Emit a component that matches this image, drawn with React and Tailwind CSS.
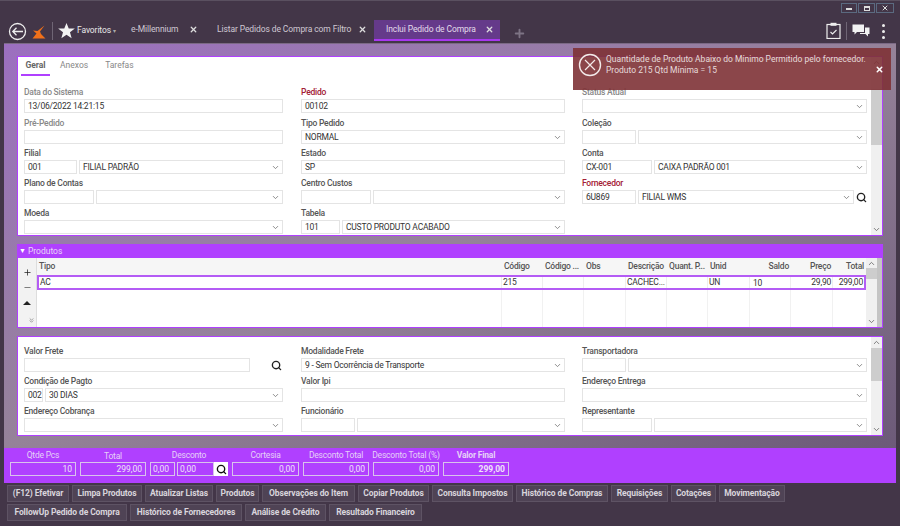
import React from "react";
import { Search, ChevronDown, ChevronUp, ChevronsDown, Plus, Minus, X } from "lucide-react";

const Chev = ({ className = "" }) => (
  <ChevronDown size={9} strokeWidth={2.2} className={"text-[#777] shrink-0 " + className} />
);

const Box = ({ w, children, grow }) => (
  <div
    className={"h-[14px] border border-[#e4e4e4] bg-white flex items-center px-[3px] text-[8.5px] tracking-[-0.22px] text-[#333] leading-none overflow-hidden whitespace-nowrap " + (grow ? "flex-1 min-w-0" : "shrink-0")}
    style={w ? { width: w } : undefined}
  >
    {children}
  </div>
);

const Combo = ({ w, children }) => (
  <div
    className={"h-[14px] border border-[#e4e4e4] bg-white flex items-center justify-between pl-[3px] pr-[2px] text-[8.5px] tracking-[-0.22px] text-[#333] leading-none overflow-hidden whitespace-nowrap " + (w ? "shrink-0" : "flex-1 min-w-0")}
    style={w ? { width: w } : undefined}
  >
    <span>{children}</span>
    <Chev />
  </div>
);

const Field = ({ label, tone = "text-[#555]", children }) => (
  <div className="h-[30px]">
    <div className={"h-[15px] flex items-center pt-px text-[8.5px] tracking-[-0.22px] leading-none font-medium " + tone}>{label}</div>
    <div className="flex gap-[2px] items-center h-[14px]">{children}</div>
  </div>
);

const Scroll = ({ thumbTop, thumbH }) => (
  <div className="w-[11px] self-stretch bg-[#f0f0f0] flex flex-col items-center justify-between py-[1px]">
    <ChevronUp size={9} strokeWidth={2.2} className="text-[#666]" />
    <div className="flex-1 w-full relative">
      <div className="w-full bg-[#cdcdcd]" style={{ marginTop: thumbTop, height: thumbH }} />
    </div>
    <ChevronDown size={9} strokeWidth={2.2} className="text-[#666]" />
  </div>
);

const cols = [
  ["Tipo", 465, "l"],
  ["Código", 41, "l"],
  ["Código ...", 41, "l"],
  ["Obs", 42, "l"],
  ["Descrição", 41, "l"],
  ["Quant. P...", 41, "l"],
  ["Unid", 42, "l"],
  ["Saldo", 41, "r"],
  ["Preço", 42, "r"],
  ["Total", 33, "r"],
];

const rowVals = ["AC", "215", "", "", "CACHEC...", "", "UN", "10", "29,90", "299,00"];

const Sum = ({ label, value, w, bold, low }) => (
  <div className="flex flex-col items-center shrink-0" style={{ width: w }}>
    <div className={"h-[13px] flex items-center text-[8.5px] tracking-[-0.2px] leading-none text-[#e6d0f8] whitespace-nowrap " + (bold ? "font-bold " : "") + (low ? "pt-[2px]" : "")}>{label}</div>
    <div className={"w-full h-[14px] border border-[#d9c2ec] flex items-center justify-end px-[3px] text-[8.5px] leading-none text-[#f0e4fa] " + (bold ? "font-bold" : "")}>{value}</div>
  </div>
);

const Btn = ({ w, children }) => (
  <div
    className="h-[17px] shrink-0 bg-[#4f4355] border border-[#5e5364] flex items-center justify-center text-[8.5px] tracking-[-0.1px] font-bold text-[#d9d5dc] leading-none whitespace-nowrap"
    style={{ width: w }}
  >
    {children}
  </div>
);

const TabX = ({ className = "" }) => <X size={9} strokeWidth={3.5} className={"text-[#ddd] " + className} />;

const RowGap = () => <div className="h-px" />;

export default function App() {
  return (
    <div className="relative w-[900px] h-[526px] overflow-hidden bg-[#433648] font-['Roboto','Open_Sans',sans-serif] border-t border-[#5a5060]">
      {/* window buttons */}
      <div className="flex justify-end gap-[1px] pt-[2px] pr-[6px] h-[18px]">
        <div className="w-[16px] h-[10px] border border-[#5b6a80] flex items-center justify-center"><div className="w-[6px] h-[2px] mt-[2px] bg-[#ddd]" /></div>
        <div className="w-[17px] h-[10px] border border-[#5b6a80] flex items-center justify-center"><div className="w-[6px] h-[5px] border border-t-2 border-[#ddd]" /></div>
        <div className="w-[18px] h-[10px] border border-[#5b6a80] flex items-center justify-center"><X size={8} strokeWidth={3} className="text-[#ddd]" /></div>
      </div>

      {/* tab bar */}
      <div className="h-[24px] flex items-start text-[8.5px] tracking-[-0.1px] leading-none text-[#cfc8d3] pt-px">
        <svg width="19" height="19" viewBox="0 0 19 19" className="ml-[8px] mt-[2px] shrink-0">
          <circle cx="9.5" cy="9.5" r="8" fill="none" stroke="#eee" strokeWidth="1.3" />
          <path d="M15 9.5H5M8.5 5.8 4.8 9.5l3.7 3.7" fill="none" stroke="#eee" strokeWidth="1.3" />
        </svg>
        <svg width="14" height="15" viewBox="0 0 14 15" className="ml-[5px] mt-[5px] shrink-0">
          <path d="M12.5 0.5 8 6.5 9 9 13.5 13.5 0.5 13.5 4.5 8.5 1 5.5 5.5 6Z" fill="#f0701a" />
        </svg>
        <div className="ml-[6px] mt-[2px] w-px h-[18px] bg-[#6f6575] shrink-0" />
        <svg width="17" height="16" viewBox="0 0 24 23" className="ml-[5px] mt-[3px] shrink-0">
          <path d="M12 0l3.2 8H24l-7 5.3L19.4 22 12 16.8 4.6 22 7 13.3 0 8h8.8z" fill="#f2f2f2" />
        </svg>
        <span className="ml-[2px] mt-[6px] w-[36px] text-[#e8e8e8] whitespace-nowrap">Favoritos</span>
        <span className="mt-[8px] text-[6px] text-[#aaa] w-[18px]">▾</span>
        <span className="mt-[5px] w-[58px] whitespace-nowrap">e-Millennium</span>
        <TabX className="mt-[5px]" />
        <span className="ml-[19px] mt-[5px] w-[141px] whitespace-nowrap">Listar Pedidos de Compra com Filtro</span>
        <TabX className="mt-[5px]" />
        <div className="ml-[7px] w-[126px] h-[21px] bg-[#653a8a] border-b-2 border-[#a838f0] flex items-start pl-[12px] pt-[5px] shrink-0">
          <span className="w-[99px] whitespace-nowrap text-[#e4dcea]">Inclui Pedido de Compra</span>
          <TabX />
        </div>
        <Plus size={13} strokeWidth={3.5} className="ml-[13px] mt-[7px] text-[#7d7384] shrink-0" />
        <div className="flex-1" />
        <svg width="15" height="17" viewBox="0 0 15 17" className="mt-[2px] shrink-0">
          <rect x="1" y="2.5" width="13" height="14" fill="none" stroke="#eee" strokeWidth="1.2" />
          <rect x="4.5" y="0.8" width="6" height="3" fill="#eee" />
          <path d="M4.5 10l2 2 4-4" fill="none" stroke="#eee" strokeWidth="1.1" />
        </svg>
        <div className="ml-[5px] mt-[2px] w-px h-[18px] bg-[#6f6575] shrink-0" />
        <svg width="18" height="13" viewBox="0 0 18 13" className="ml-[5px] mt-[4px] shrink-0">
          <path d="M0.5 0.5H12V8H5L2.5 10.5V8H.5Z" fill="#f2f2f2" />
          <path d="M13 3.5H17.5V10H16V12.5L13.5 10H8V9H13Z" fill="#f2f2f2" />
        </svg>
        <div className="ml-[12px] mr-[15px] mt-[4px] flex flex-col gap-[3px] shrink-0">
          <div className="w-[3px] h-[3px] rounded-full bg-[#eee]" />
          <div className="w-[3px] h-[3px] rounded-full bg-[#eee]" />
          <div className="w-[3px] h-[3px] rounded-full bg-[#eee]" />
        </div>
      </div>

      {/* main panel */}
      <div className="mx-[4px] h-[405px] bg-gradient-to-br from-[#9c6fc0] via-[#958299] to-[#6c5a78] px-[13px] pt-[12px] border-t border-[#7b6a85]">
        {/* card 1 */}
        <div className="h-[180px] bg-white border border-[#b040ff] flex overflow-hidden">
          <div className="flex-1 min-w-0">
            <div className="h-[20px] flex pl-[3px] text-[8.5px] leading-none">
              <div className="w-[29px] h-[19px] border-b-2 border-[#b040ff] flex items-start pt-[4px] justify-center font-bold text-[#666]">Geral</div>
              <div className="ml-[10px] h-[19px] flex items-start pt-[4px] text-[#888]">Anexos</div>
              <div className="ml-[17px] h-[19px] flex items-start pt-[4px] text-[#888]">Tarefas</div>
            </div>
            <div className="flex pl-[6px] pt-[7px]">
              <div className="w-[259px] shrink-0">
                <Field label="Data do Sistema" tone="text-[#888]"><Box grow>13/06/2022 14:21:15</Box></Field>
                <RowGap />
                <Field label="Pré-Pedido" tone="text-[#888]"><Box grow /></Field>
                <Field label="Filial"><Box w={53}>001</Box><Combo>FILIAL PADRÃO</Combo></Field>
                <Field label="Plano de Contas"><Box w={70} /><Combo /></Field>
                <Field label="Moeda"><Combo /></Field>
              </div>
              <div className="w-[264px] shrink-0 ml-[18px]">
                <Field label="Pedido" tone="text-[#a32035]"><Box grow>00102</Box></Field>
                <RowGap />
                <Field label="Tipo Pedido"><Combo>NORMAL</Combo></Field>
                <Field label="Estado"><Box grow>SP</Box></Field>
                <Field label="Centro Custos"><Box w={70} /><Combo /></Field>
                <Field label="Tabela"><Box w={39}>101</Box><Combo>CUSTO PRODUTO ACABADO</Combo></Field>
              </div>
              <div className="w-[285px] shrink-0 ml-[17px]">
                <Field label="Status Atual" tone="text-[#888]"><Combo /></Field>
                <RowGap />
                <Field label="Coleção"><Box w={54} /><Combo /></Field>
                <Field label="Conta"><Box w={70}>CX-001</Box><Combo>CAIXA PADRÃO 001</Combo></Field>
                <Field label="Fornecedor" tone="text-[#a32035]">
                  <Box w={54}>6U869</Box>
                  <Combo>FILIAL WMS</Combo>
                  <Search size={11} strokeWidth={3} className="text-[#222] shrink-0" />
                </Field>
              </div>
            </div>
          </div>
          <Scroll thumbTop={22} thumbH={56} />
        </div>

        {/* products */}
        <div className="mt-[8px] h-[84px] flex flex-col">
          <div className="h-[14px] bg-[#b040ff] flex items-center pl-[2px] gap-[2px] text-[8.5px] leading-none text-[#e8d6f8]">
            <span className="text-[7px] text-white">▼</span>Produtos
          </div>
          <div className="flex-1 bg-white border border-t-0 border-[#b040ff] flex min-h-0">
            <div className="w-[19px] shrink-0 bg-[#f2f2f2] border-r border-[#ddd] relative flex flex-col items-center pt-[10px] gap-[6px]">
              <Plus size={9} strokeWidth={2} className="text-[#222]" />
              <Minus size={9} strokeWidth={2} className="text-[#555]" />
              <div className="w-0 h-0 border-x-[4px] border-x-transparent border-b-[4px] border-b-[#222] mt-[3px]" />
              <ChevronsDown size={7} strokeWidth={2} className="text-[#666] ml-[8px] mt-[6px]" />
            </div>
            <div className="w-[829px] shrink-0 flex flex-col">
              <div className="h-[17px] flex bg-[#f6f6f6] text-[8.5px] tracking-[-0.22px] leading-none text-[#555] font-medium">
                {cols.map(([n, w, a]) => (
                  <div key={n} className={"flex items-center px-[2px] whitespace-nowrap " + (a === "r" ? "justify-end" : "")} style={{ width: w }}>{n}</div>
                ))}
              </div>
              <div className="h-[15px] flex border-2 border-[#b45cf5] bg-white text-[8.5px] tracking-[-0.22px] leading-none text-[#333]">
                {cols.map(([n, w, a], i) => (
                  <div key={n} className={"flex items-center px-[1px] whitespace-nowrap border-r border-[#eee] last:border-r-0 " + (a === "r" && i !== 7 ? "justify-end " : "") + (i === 7 ? "pl-[3px] pt-[2px]" : "")} style={{ width: i === 0 ? w - 2 : i === 9 ? w - 2 : w }}>{rowVals[i]}</div>
                ))}
              </div>
              <div className="flex-1 flex">
                {cols.map(([n, w]) => (
                  <div key={n} className="border-r border-[#f1f1f1] last:border-r-0" style={{ width: w }} />
                ))}
              </div>
            </div>
            <Scroll thumbTop={0} thumbH={11} />
            <div className="flex-1 bg-[#c4c4c4]" />
          </div>
        </div>

        {/* card 3 */}
        <div className="mt-[8px] h-[100px] bg-white border border-[#b040ff] flex overflow-hidden">
          <div className="flex-1 min-w-0 flex pl-[6px] pt-[6px]">
            <div className="w-[259px] shrink-0">
              <Field label="Valor Frete">
                <Box w={226} />
                <Search size={11} strokeWidth={3} className="text-[#222] shrink-0 ml-[19px]" />
              </Field>
              <Field label="Condição de Pagto"><Box w={19}>002</Box><Combo>30 DIAS</Combo></Field>
              <Field label="Endereço Cobrança"><Combo /></Field>
            </div>
            <div className="w-[264px] shrink-0 ml-[18px]">
              <Field label="Modalidade Frete"><Combo>9 - Sem Ocorrência de Transporte</Combo></Field>
              <Field label="Valor Ipi"><Box grow /></Field>
              <Field label="Funcionário"><Box w={54} /><Combo /></Field>
            </div>
            <div className="w-[285px] shrink-0 ml-[17px]">
              <Field label="Transportadora"><Box w={44} /><Combo /></Field>
              <Field label="Endereço Entrega"><Combo /></Field>
              <Field label="Representante"><Box w={70} /><Combo /></Field>
            </div>
          </div>
          <Scroll thumbTop={1} thumbH={33} />
        </div>
      </div>

      {/* summary */}
      <div className="mx-[4px] h-[35px] bg-[#b040ff] flex items-start gap-[4px] pl-[6px] pt-[1px]">
        <Sum label="Qtde Pcs" value="10" w={66} />
        <Sum label="Total" value="299,00" w={66} low />
        <div className="w-[78px] shrink-0 flex flex-col items-center">
          <div className="h-[13px] flex items-center text-[8.5px] tracking-[-0.2px] leading-none text-[#e6d0f8]">Desconto</div>
          <div className="flex w-full gap-[2px]">
            <div className="w-[25px] h-[14px] border border-[#d9c2ec] flex items-center px-[2px] text-[8.5px] leading-none text-[#f0e4fa]">0,00</div>
            <div className="w-[37px] h-[14px] border border-[#d9c2ec] flex items-center px-[2px] text-[8.5px] leading-none text-[#f0e4fa]">0,00</div>
            <div className="w-[14px] h-[14px] -ml-[2px] bg-white flex items-center justify-center"><Search size={11} strokeWidth={3} className="text-[#111]" /></div>
          </div>
        </div>
        <Sum label="Cortesia" value="0,00" w={67} />
        <Sum label="Desconto Total" value="0,00" w={66} />
        <Sum label="Desconto Total (%)" value="0,00" w={66} />
        <Sum label="Valor Final" value="299,00" w={66} bold />
      </div>

      {/* buttons */}
      <div className="pl-[7px] pt-[2px] flex flex-col gap-[2px]">
        <div className="flex gap-[3px]">
          <Btn w={62}>(F12) Efetivar</Btn>
          <Btn w={70}>Limpa Produtos</Btn>
          <Btn w={68}>Atualizar Listas</Btn>
          <Btn w={43}>Produtos</Btn>
          <Btn w={93}>Observações do Item</Btn>
          <Btn w={71}>Copiar Produtos</Btn>
          <Btn w={81}>Consulta Impostos</Btn>
          <Btn w={92}>Histórico de Compras</Btn>
          <Btn w={57}>Requisições</Btn>
          <Btn w={45}>Cotações</Btn>
          <Btn w={66}>Movimentação</Btn>
        </div>
        <div className="flex gap-[3px]">
          <Btn w={120}>FollowUp Pedido de Compra</Btn>
          <Btn w={112}>Histórico de Fornecedores</Btn>
          <Btn w={81}>Análise de Crédito</Btn>
          <Btn w={93}>Resultado Financeiro</Btn>
        </div>
      </div>

      {/* toast */}
      <div className="absolute left-[573px] top-[47px] w-[318px] h-[42px] bg-[#7e3236]/90 flex items-start text-[8.5px] leading-[11px] text-[#e6dada]">
        <svg width="24" height="24" viewBox="0 0 24 24" className="ml-[5px] mt-[5px] shrink-0">
          <circle cx="12" cy="12" r="10.5" fill="none" stroke="#f3eaea" strokeWidth="1.4" />
          <path d="M7 7l10 10M17 7 7 17" stroke="#f3eaea" strokeWidth="1.2" />
        </svg>
        <div className="ml-[4px] mt-[6px] w-[266px] whitespace-nowrap">
          <div>Quantidade de Produto Abaixo do Mínimo Permitido pelo fornecedor.</div>
          <div>Produto 215 Qtd Mínima = 15</div>
        </div>
        <X size={9} strokeWidth={4} className="text-white ml-[3px] mt-[17px]" />
      </div>
    </div>
  );
}
